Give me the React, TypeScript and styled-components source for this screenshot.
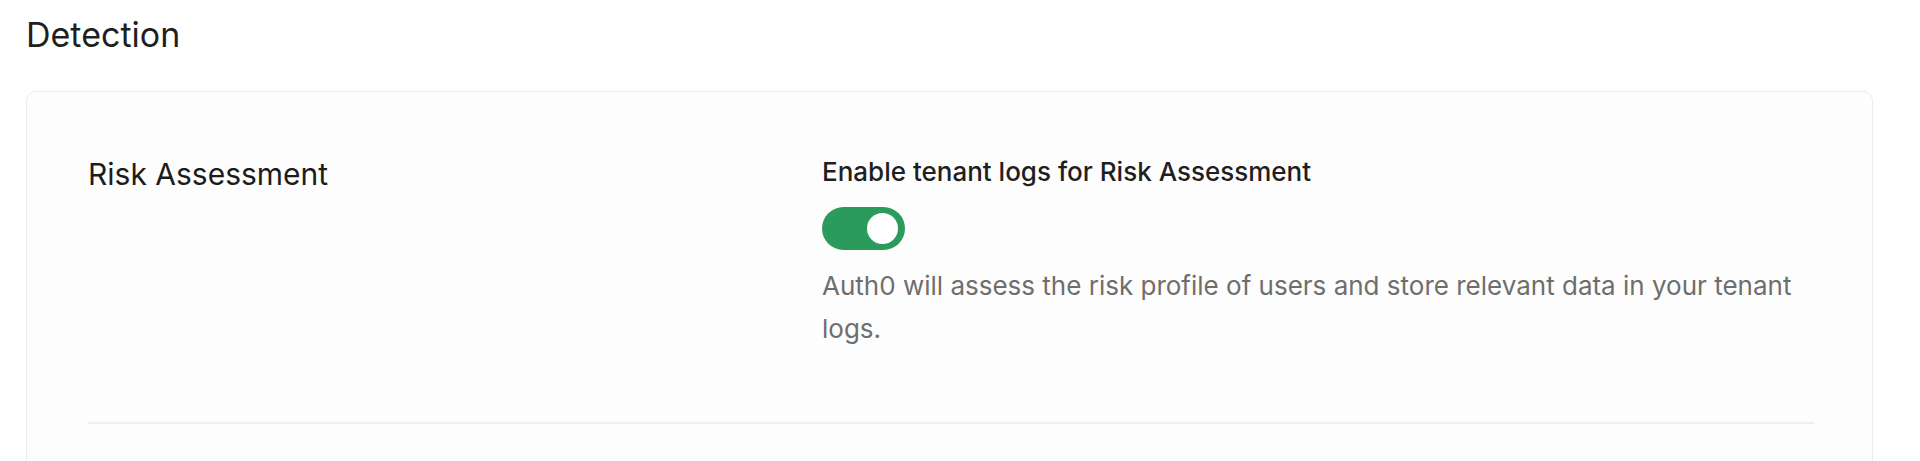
import React, { useState } from 'react';
import styled, { createGlobalStyle } from 'styled-components';

const GlobalStyle = createGlobalStyle`
  html, body {
    margin: 0;
    padding: 0;
    background: #ffffff;
    font-family: Inter, "Noto Sans", "Liberation Sans", sans-serif;
    overflow: hidden;
  }
`

const Page = styled.main`
  padding: 14px 47px 0 26px;
`

const SectionTitle = styled.h2`
  margin: 0 0 35px;
  font-size: 34px;
  line-height: 42px;
  font-weight: 400;
  color: #1f1f1f;
`

const Card = styled.section`
  background: #fdfdfd;
  border: 1.5px solid #ececec;
  border-radius: 10px;
  padding: 62px 58px 120px 61px;
`

const SettingRow = styled.div`
  display: grid;
  grid-template-columns: 710px 1fr;
  column-gap: 24px;
  padding-bottom: 72px;
  border-bottom: 2px solid #efefef;
`

const SettingName = styled.h3`
  margin: 0;
  font-size: 30px;
  line-height: 40px;
  font-weight: 400;
  color: #1c1c1c;
`

const Control = styled.div`
  display: flex;
  flex-direction: column;
  align-items: flex-start;
`

const ControlLabel = styled.label`
  font-size: 26px;
  line-height: 36px;
  font-weight: 500;
  color: #1f1f1f;
`

const Switch = styled.button<{ $on: boolean }>`
  position: relative;
  margin-top: 17px;
  width: 83px;
  height: 43px;
  padding: 0;
  border: none;
  border-radius: 22px;
  background: ${(p) => (p.$on ? '#2a9b5b' : '#c9c9c9')};
  cursor: pointer;

  &::after {
    content: '';
    position: absolute;
    top: 6px;
    left: ${(p) => (p.$on ? '45px' : '7px')};
    width: 31px;
    height: 31px;
    border-radius: 50%;
    background: #ffffff;
    transition: left 0.2s;
  }
`

const Help = styled.p`
  margin: 14px 0 0;
  font-size: 26px;
  line-height: 43px;
  font-weight: 400;
  color: #6e6e6e;
`

const App = () => {
  const [enabled, setEnabled] = useState(true);

  return (
    <>
      <GlobalStyle />
      <Page>
        <SectionTitle>Detection</SectionTitle>
        <Card>
          <SettingRow>
            <SettingName>Risk Assessment</SettingName>
            <Control>
              <ControlLabel>Enable tenant logs for Risk Assessment</ControlLabel>
              <Switch
                type="button"
                role="switch"
                aria-checked={enabled}
                $on={enabled}
                onClick={() => setEnabled(!enabled)}
              />
              <Help>
                Auth0 will assess the risk profile of users and store relevant data in your tenant logs.
              </Help>
            </Control>
          </SettingRow>
        </Card>
      </Page>
    </>
  );
};

export default App;
